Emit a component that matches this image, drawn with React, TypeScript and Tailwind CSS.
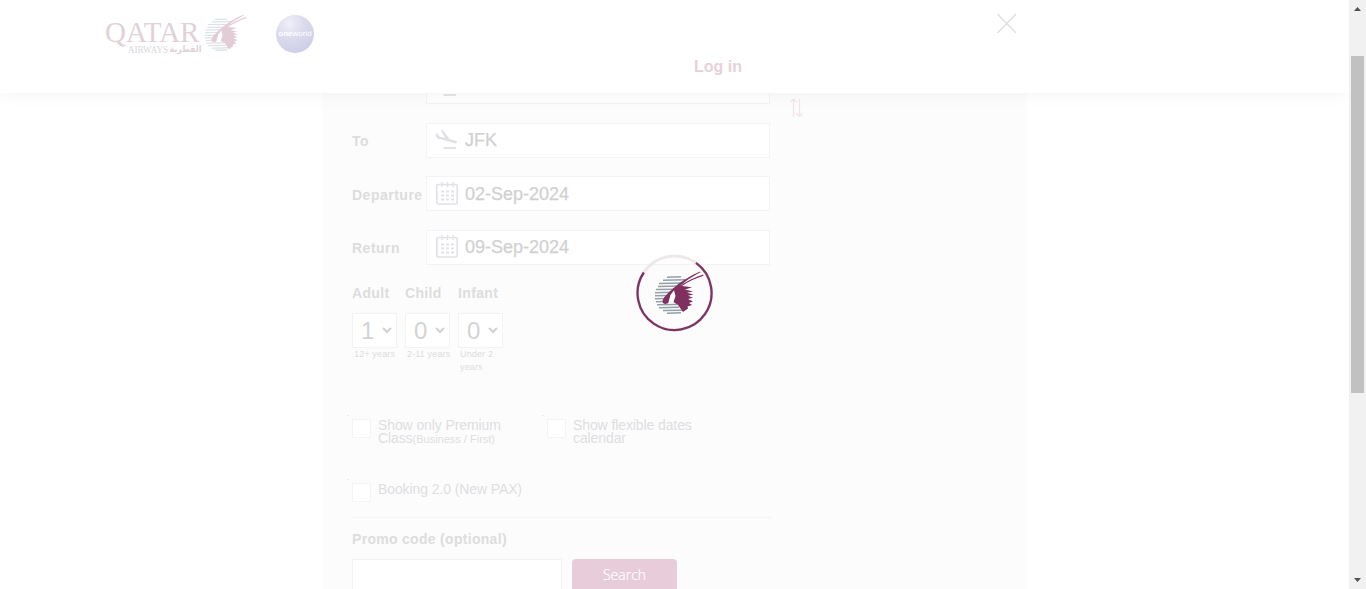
import React from "react";

function Oryx({ stripe, body }: { stripe: string; body: string }) {
  const rows = [
    [13, 27, 2], [9, 31, 5], [5, 30, 8.2], [4, 27, 11.3], [2, 22, 14.4], [1, 19, 17.5], [1, 16, 20.6],
    [1, 14, 23.6], [2, 11, 26.6], [3, 23, 29.6], [5, 25, 32.5], [9, 28, 35.4], [13, 27, 38],
  ];
  return (
    <>
      {rows.map(([a, b, y]) => (
        <path key={y} d={`M${a} ${y + 0.2}L${b} ${y - 0.2}`} stroke={stripe} strokeWidth="1.5" />
      ))}
      <path
        d="M8.500 26C9.500 22 14 18 19 13.500C27 6 36 1 46 -3.500L46.500 -2.700C37 2 30 7.500 25 11.500C32 6.500 40 2.500 49 -.5L49.500 .8C41 3.500 34 7 28 11L38 12.300L31 14.500L39 16.500L33 17.800L39.500 19.500L34 20.800L39 22.700L34 24L39 26.500L35 28L38 30L33.500 31.500L34 33.500L29 37L24 30L19.500 27L21.500 21L20 15.500C18 18 17 23 14.500 27.500C12 30 8.500 29 8.500 26Z"
        fill={body}
      />
      <path d="M14.500 27L16.500 20L19.800 15.500L21 20L18.500 25Z" fill="#fff" />
    </>
  );
}

function Brand() {
  return (
    <svg className="mt-3 ml-[104px] h-[44px] w-[144px] shrink-0" viewBox="0 0 144 44" role="img" aria-label="Qatar Airways">
      <text x="1" y="30" fontFamily="Liberation Serif, serif" fontSize="30" fill="#e2d1d9" textLength="94.500" lengthAdjust="spacingAndGlyphs">QATAR</text>
      <text x="24" y="41" fontFamily="Liberation Serif, serif" fontSize="11" fill="#d6d8dc" textLength="40" lengthAdjust="spacingAndGlyphs">AIRWAYS</text>
      <text x="97.500" y="40" direction="rtl" fontFamily="DejaVu Sans, sans-serif" fontWeight="bold" fontSize="9" fill="#e2d1d9" textLength="32" lengthAdjust="spacingAndGlyphs">القطرية</text>
      <g transform="translate(100 5.500) scale(.86)">
        <Oryx stripe="#dde2e6" body="#e2cdd7" />
      </g>
    </svg>
  );
}

function OneWorld() {
  return (
    <div className="mt-[15px] ml-7 flex h-[38px] w-[38px] items-center justify-center rounded-full bg-[radial-gradient(circle_at_35%_22%,#f0f0f8_0%,#dcdcee_35%,#d0cfe7_75%,#cbcae4_100%)] font-['Liberation_Sans',sans-serif] text-[8px] leading-none text-white">
      <b>one</b>world
    </div>
  );
}

function PlaneIcon() {
  return (
    <svg className="h-[22px] w-6 shrink-0" viewBox="0 0 24 22" fill="none">
      <path d="M1 4.500L2.500 4.500L4.500 7.500L10 9L5.500 1L8 1.200L14.500 10L21.500 12Q22.500 13.500 21 14.500L2.500 9.500Q.8 8.700 1 4.500Z" fill="#dfe1e4" />
      <path d="M8.500 19H21" stroke="#e1e5e8" strokeWidth="2" />
    </svg>
  );
}

function CalendarIcon() {
  return (
    <svg className="mb-0.5 h-6 w-6 shrink-0" viewBox="0 0 24 24" fill="none" stroke="#e1e2e7">
      <rect x="1.800" y="3.500" width="20.400" height="19.500" rx="1.500" strokeWidth="1.700" />
      <path d="M7 1V6M12.500 1V6M18 1V6" strokeWidth="1.400" />
      <path d="M6 10.500H19M6 14.500H19M6 18.500H19" strokeWidth="1.800" strokeDasharray="3 2" />
    </svg>
  );
}

function Field({ label, value, icon }: { label: string; value: string; icon: React.ReactNode }) {
  return (
    <div className="flex h-[35px] items-center">
      <label className="w-[74px] shrink-0 pt-0.5 text-sm font-bold tracking-[0.5px] whitespace-nowrap text-[#dddddd]">{label}</label>
      <div className="flex h-full w-[344px] items-center border border-[#f3f3f4] bg-white pl-2">
        {icon}
        <span className="ml-1.5 text-[18px] leading-none text-[#d0d0d0] [-webkit-text-stroke:0.25px_#d3d3d3]">{value}</span>
      </div>
    </div>
  );
}

function Passenger({ label, value, hint }: { label: string; value: number; hint: string }) {
  return (
    <div className="w-[45px]">
      <div className="h-7 text-sm leading-4 font-bold tracking-[0.35px] whitespace-nowrap text-[#dddddd]">{label}</div>
      <div className="flex h-[35px] items-center border border-[#f3f3f4] bg-white pt-px pl-2 text-2xl leading-none text-[#d3d3d3]">
        <span className="w-[13px]">{value}</span>
        <svg className="ml-[7px] h-2 w-3" viewBox="0 0 12 8" fill="none" stroke="#d3d3d3" strokeWidth="2">
          <path d="M2 1L6 5L10 1" />
        </svg>
      </div>
      <div className="w-[47px] pl-0.5 text-[9px] leading-[13px] tracking-[0.15px] text-[#dcdce0]">{hint}</div>
    </div>
  );
}

function Check({ children }: { children: React.ReactNode }) {
  return (
    <label className="relative flex w-[195px] items-start">
      <span className="absolute -top-1 -left-[5px] h-px w-0.5 bg-[#ececee]" />
      <span className="h-[19px] w-[19px] shrink-0 border border-[#f4f4f5] bg-white" />
      <span className="ml-[7px] text-sm leading-[13px] tracking-[-0.1px] whitespace-nowrap text-[#dedee2]">{children}</span>
    </label>
  );
}

function SearchPanel() {
  return (
    <main className="mx-auto h-[589px] w-[705px] bg-[#fcfcfc] pt-[69px] pl-[30px]">
      <div className="flex">
        <div className="flex flex-col gap-[18.500px]">
          <Field label="From" value="" icon={<PlaneIcon />} />
          <Field label="To" value="JFK" icon={<PlaneIcon />} />
          <Field label="Departure" value="02-Sep-2024" icon={<CalendarIcon />} />
          <Field label="Return" value="09-Sep-2024" icon={<CalendarIcon />} />
        </div>
        <svg className="mt-[29px] ml-[19px] h-5 w-[15px]" viewBox="0 0 15 20" fill="none" stroke="#f5e3e8" strokeWidth="1.200">
          <path d="M4.500 19V1M1.500 4L4.500 1L7.500 4M10.500 1V18.500M7.500 15.500L10.500 18.500L13.500 15.500" />
        </svg>
      </div>
      <div className="mt-5 flex h-[134px] gap-2">
        <Passenger label="Adult" value={1} hint="12+ years" />
        <Passenger label="Child" value={0} hint="2-11 years" />
        <Passenger label="Infant" value={0} hint="Under 2 years" />
      </div>
      <div className="flex h-16">
        <Check>Show only Premium<br />Class<span className="text-[11px] tracking-normal">(Business / First)</span></Check>
        <Check>Show flexible dates<br />calendar</Check>
      </div>
      <div className="h-[34px]"><Check>Booking 2.0 (New PAX)</Check></div>
      <div className="h-px w-[420px] bg-[#f5f5f5]" />
      <div className="mt-[13px] text-sm leading-4 font-bold tracking-[0.3px] text-[#dddddd]">Promo code (optional)</div>
      <div className="mt-3 flex gap-2.5">
        <div className="h-[35px] w-[210px] border border-[#f3f3f4] bg-white" />
        <div className="h-[35px] w-[105px] rounded-sm bg-[#e9ccda] pt-1.5 text-center font-['Open_Sans',sans-serif] text-sm leading-5 font-light text-white [-webkit-text-stroke:0.2px_white]">Search</div>
      </div>
    </main>
  );
}

function Header() {
  return (
    <header className="absolute inset-x-0 top-0 flex h-[93px] bg-white shadow-[0_2px_16px_rgba(0,0,0,0.045)]">
      <Brand />
      <OneWorld />
      <div className="mt-[59px] ml-[380px] w-[303px] text-base leading-4 font-bold text-[#e8d0d9]">Log in</div>
      <svg className="mt-[13px] h-5 w-5" viewBox="0 0 20 20" stroke="#dcdcdc" strokeWidth="1.200">
        <path d="M.5 1L19 20M19 1L.5 20" />
      </svg>
    </header>
  );
}

function Loader() {
  return (
    <svg className="absolute top-[254px] left-[635px] h-[78px] w-[78px]" viewBox="0 0 78 78" fill="none">
      <circle cx="39.500" cy="39" r="37" stroke="#eee8eb" strokeWidth="3" />
      <path d="M61 8.900A37 37 0 1 1 8.800 18.500" stroke="#7d3261" strokeWidth="2.300" />
      <g transform="translate(19 21)">
        <Oryx stripe="#93a0aa" body="#80305f" />
      </g>
    </svg>
  );
}

function Scrollbar() {
  return (
    <aside className="flex h-full w-[17px] flex-col items-center bg-[#f1f1f1]">
      <svg className="mt-[7px] h-1 w-[7px]" viewBox="0 0 7 4"><path d="M0 4L3.500 0L7 4Z" fill="#505050" /></svg>
      <div className="mt-[45px] h-[337px] w-[13px] bg-[#c1c1c1]" />
      <svg className="mt-auto mb-[7px] h-1 w-[7px]" viewBox="0 0 7 4"><path d="M0 0H7L3.500 4Z" fill="#505050" /></svg>
    </aside>
  );
}

export default function App() {
  return (
    <div className="flex h-[589px] w-[1366px] overflow-hidden bg-white font-['Liberation_Sans',Arial,sans-serif]">
      <div className="relative h-full w-[1349px] overflow-hidden">
        <SearchPanel />
        <Header />
        <Loader />
      </div>
      <Scrollbar />
    </div>
  );
}
